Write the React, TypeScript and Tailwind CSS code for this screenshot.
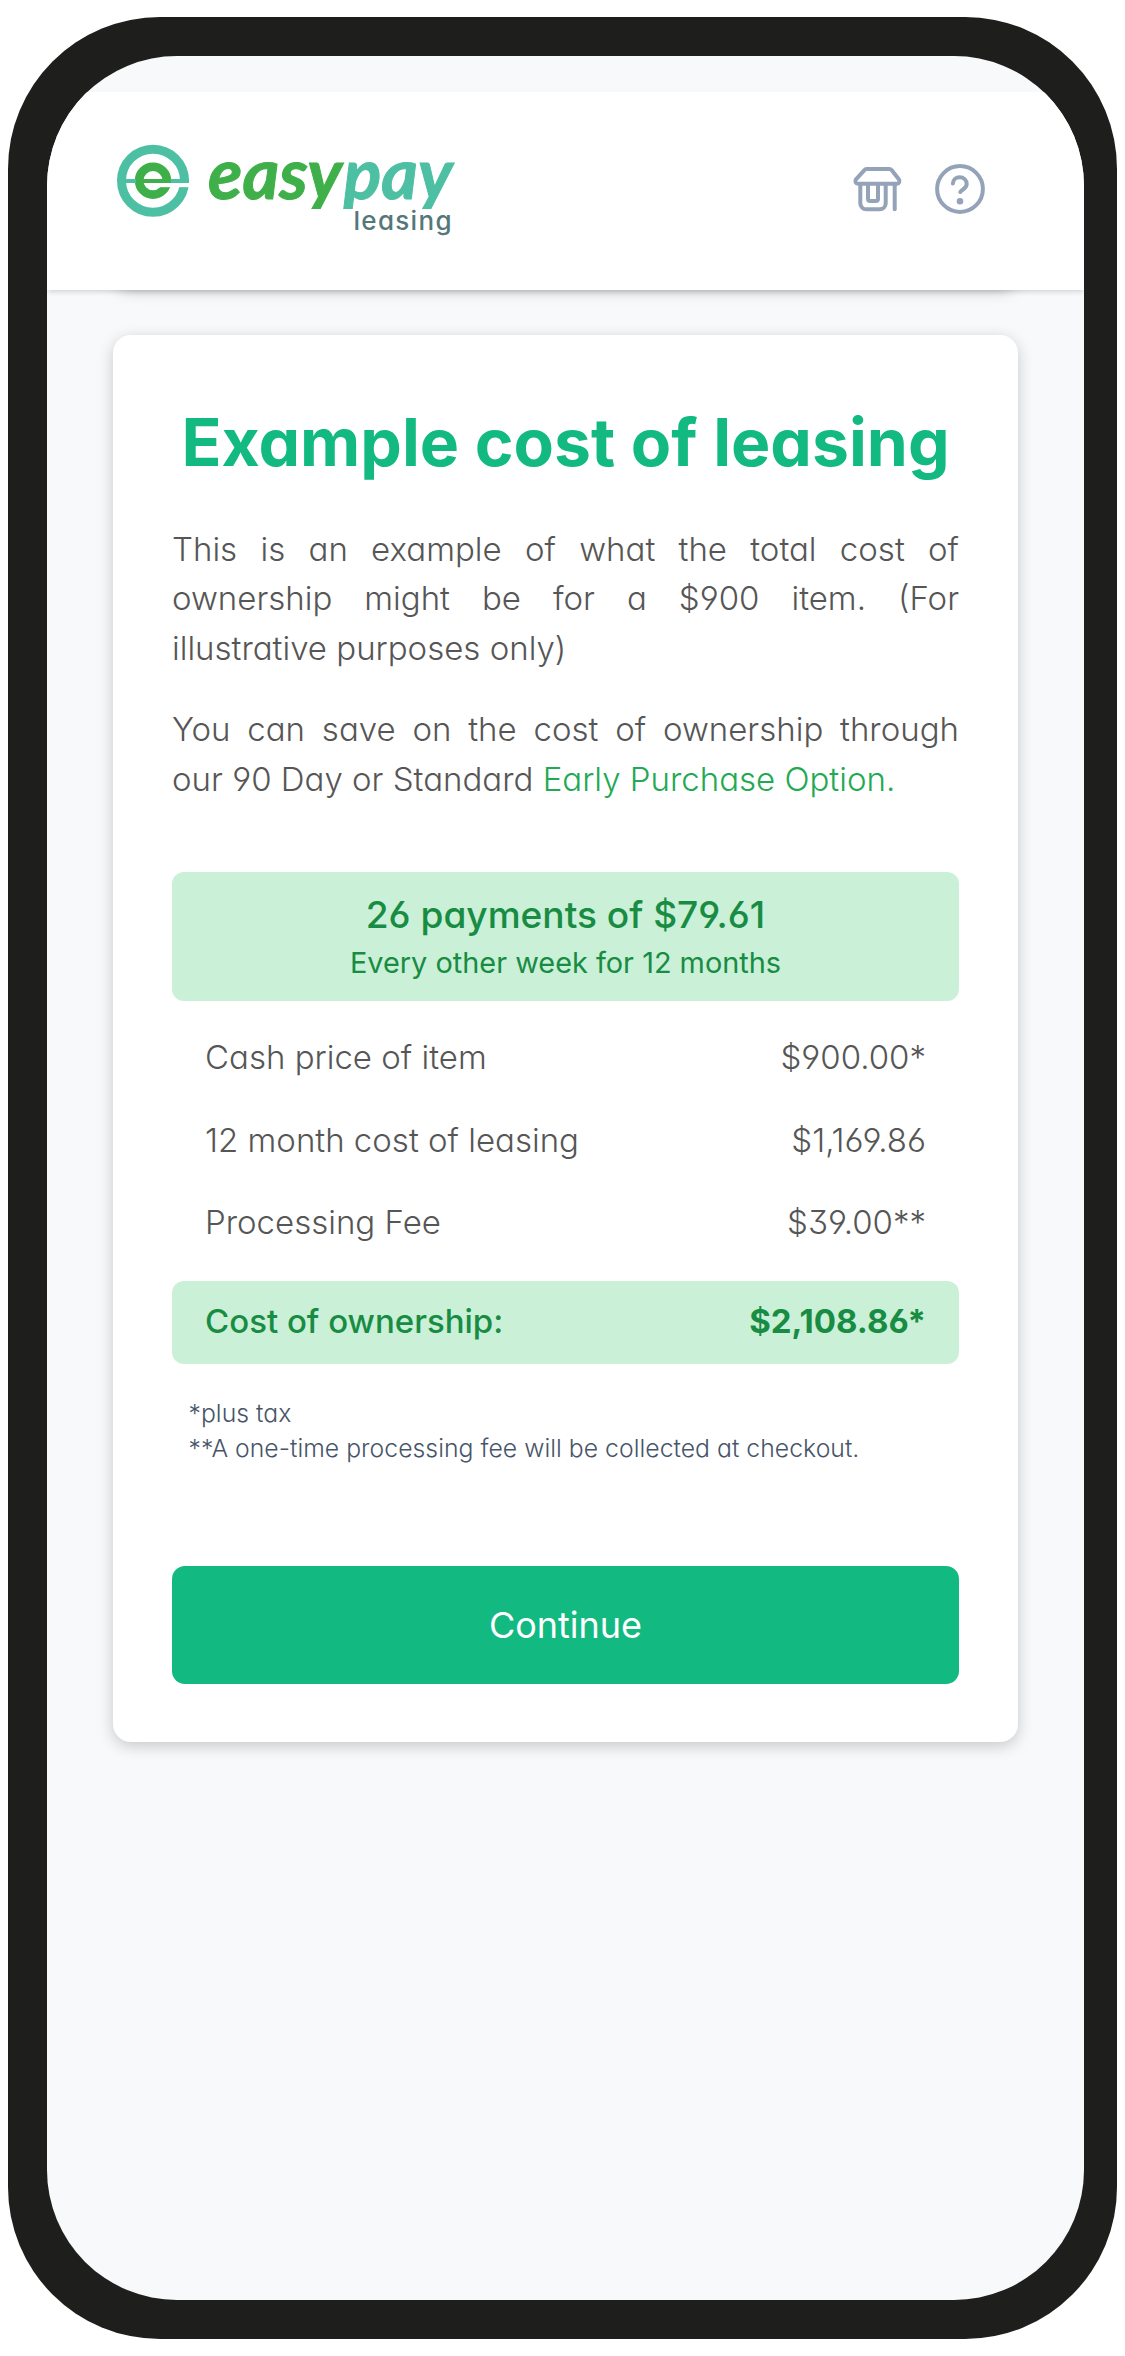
const ROWS = [
  { label: "Cash price of item", value: "$900.00*" },
  { label: "12 month cost of leasing", value: "$1,169.86" },
  { label: "Processing Fee", value: "$39.00**" },
];

function Logo() {
  return (
    <svg width="370" height="120" viewBox="0 0 370 120" className="block" aria-label="easypay leasing">
      <defs>
        <clipPath id="wordmark">
          <rect x="0" y="0" width="370" height="79" />
        </clipPath>
      </defs>
      <circle cx="53" cy="50.7" r="31.5" fill="none" stroke="#4dbfa3" strokeWidth="9" />
      <circle cx="53" cy="50.7" r="13.9" fill="none" stroke="#3fb049" strokeWidth="8.6" />
      <rect x="57" y="53" width="35" height="4.2" fill="#fff" />
      <rect x="25" y="49" width="64" height="4" fill="#4dbfa3" />
      <rect x="36" y="49" width="34.8" height="4" fill="#3fb049" />
      <g
        clipPath="url(#wordmark)"
        fontFamily="Lato, sans-serif"
        fontWeight="700"
        fontStyle="italic"
        fontSize="70"
        strokeWidth="1"
      >
        <text x="108" y="68.7" textLength="134" lengthAdjust="spacingAndGlyphs" fill="#3fb049" stroke="#3fb049">
          easy
        </text>
        <text x="243.5" y="68.7" textLength="109" lengthAdjust="spacingAndGlyphs" fill="#4dbfa3" stroke="#4dbfa3">
          pay
        </text>
      </g>
      <text
        x="253.500"
        y="99.700"
        textLength="98"
        lengthAdjust="spacing"
        fontFamily="Inter, sans-serif"
        fontWeight="500"
        fontSize="26"
        fill="#56777a"
      >
        leasing
      </text>
    </svg>
  );
}

function StoreIcon() {
  return (
    <svg width="54" height="54" viewBox="20 22 54 54" fill="none" stroke="#94a3b8" strokeWidth="4" strokeLinecap="round" strokeLinejoin="round">
      <path d="M36.6 29h22.8c.9 0 1.7.4 2.2 1.1l7.2 9.2c1.5 1.9.4 4.400-2 4.400H28c-2.400 0-3.500-2.500-2-4.400l8.400-9.200c.5-.7 1.300-1.100 2.200-1.100z" />
      <path d="M30.300 44v19.300a6 6 0 0 0 6 6h13.400a6 6 0 0 0 6-6V44" />
      <path d="M38 44v14.700c0 1.300 1 2.300 2.300 2.300h5.400c1.300 0 2.300-1 2.300-2.300V44" />
      <path d="M64.700 44v25.300" />
    </svg>
  );
}

function HelpIcon() {
  return (
    <svg width="54" height="54" viewBox="103 22 54 54" fill="none" stroke="#94a3b8" strokeWidth="4" strokeLinecap="round" strokeLinejoin="round">
      <circle cx="130" cy="49" r="22.900" />
      <path d="M122.900 43.500c.2-3.600 3-6.200 6.700-6.200 4 0 7.100 2.900 7.100 6.800 0 4.600-4.700 5.100-6.400 7.900" />
      <circle cx="130" cy="61.300" r="3.300" fill="#94a3b8" stroke="none" />
    </svg>
  );
}

export default function App() {
  return (
    <div className="h-[2356px] w-[1125px] bg-white pt-[17px] pl-2 font-['Inter',sans-serif] [font-feature-settings:'cv11','ss01','cv03','cv04']">
      <div className="h-[2322px] w-[1109px] rounded-[152px] bg-[#1e1e1c] pt-[38.500px] pl-[39px]">
        <div className="flex h-[2244px] w-[1037px] flex-col overflow-hidden rounded-[130px] bg-[#f8f9fb] pt-9">
          <header className="relative z-10 flex h-[198px] shrink-0 items-start justify-between bg-white pl-[53px] shadow-[0_3px_5px_-1px_rgba(0,0,0,0.15)]">
            <div className="pt-[38.500px]">
              <Logo />
            </div>
            <div className="flex gap-[29px] pt-[70.500px] pr-[97px]">
              <StoreIcon />
              <HelpIcon />
            </div>
          </header>
          <div className="mx-[66px] -mt-[46px] h-10 shrink-0 rounded-[18px] bg-white shadow-[0_4px_16px_rgba(0,0,0,0.34)]" />

          <main className="mx-[66px] mt-[51.500px] flex h-[1407px] shrink-0 flex-col rounded-[18px] bg-white px-[59px] pt-[67px] shadow-[0_4px_16px_rgba(0,0,0,0.2)]">
            <h1 className="text-center text-[66px] leading-[80px] font-bold whitespace-nowrap text-[#12b981]">
              Example cost of leasing
            </h1>
            <div className="mt-[42.500px] text-justify text-[33px] leading-[49.500px] font-light text-[#565656]">
              <p>
                This is an example of what the total cost of ownership might be for a $900 item. (For
                illustrative purposes only)
              </p>
              <p className="mt-8">
                You can save on the cost of ownership through our&nbsp;90&nbsp;Day or Standard{" "}
                <a className="text-[#22a954]">Early Purchase Option.</a>
              </p>
            </div>

            <section className="mt-[67.500px] flex h-[129.500px] flex-col items-center rounded-[12px] bg-[#caf0d8] pt-[16.500px] text-[#188c43]">
              <div className="text-[37.100px] leading-[54px] font-medium">26 payments of $79.61</div>
              <div className="text-[28.900px] leading-[42px]">Every other week for 12 months</div>
            </section>

            <dl className="mt-[15.500px] text-[33px] leading-[49.500px] font-light text-[#565656]">
              {ROWS.map((r) => (
                <div key={r.label} className="flex justify-between px-[33px] py-[16.500px]">
                  <dt>{r.label}</dt>
                  <dd>{r.value}</dd>
                </div>
              ))}
            </dl>

            <div className="mt-[17px] flex h-[83px] items-center justify-between rounded-[12px] bg-[#caf0d8] px-[33px] pb-0.5 text-[33px] text-[#188c43]">
              <span className="font-medium">Cost of ownership:</span>
              <span className="font-bold">$2,108.86*</span>
            </div>

            <div className="mt-8 px-[16.500px] text-[24.750px] leading-[35px] font-light tracking-[0.03px] whitespace-nowrap text-[#475569]">
              <p>*plus tax</p>
              <p>**A one-time processing fee will be collected at checkout.</p>
            </div>

            <button className="mt-[100px] h-[118px] shrink-0 rounded-[13px] bg-[#12b981] text-[36px] font-normal text-white">
              Continue
            </button>
          </main>
        </div>
      </div>
    </div>
  );
}
